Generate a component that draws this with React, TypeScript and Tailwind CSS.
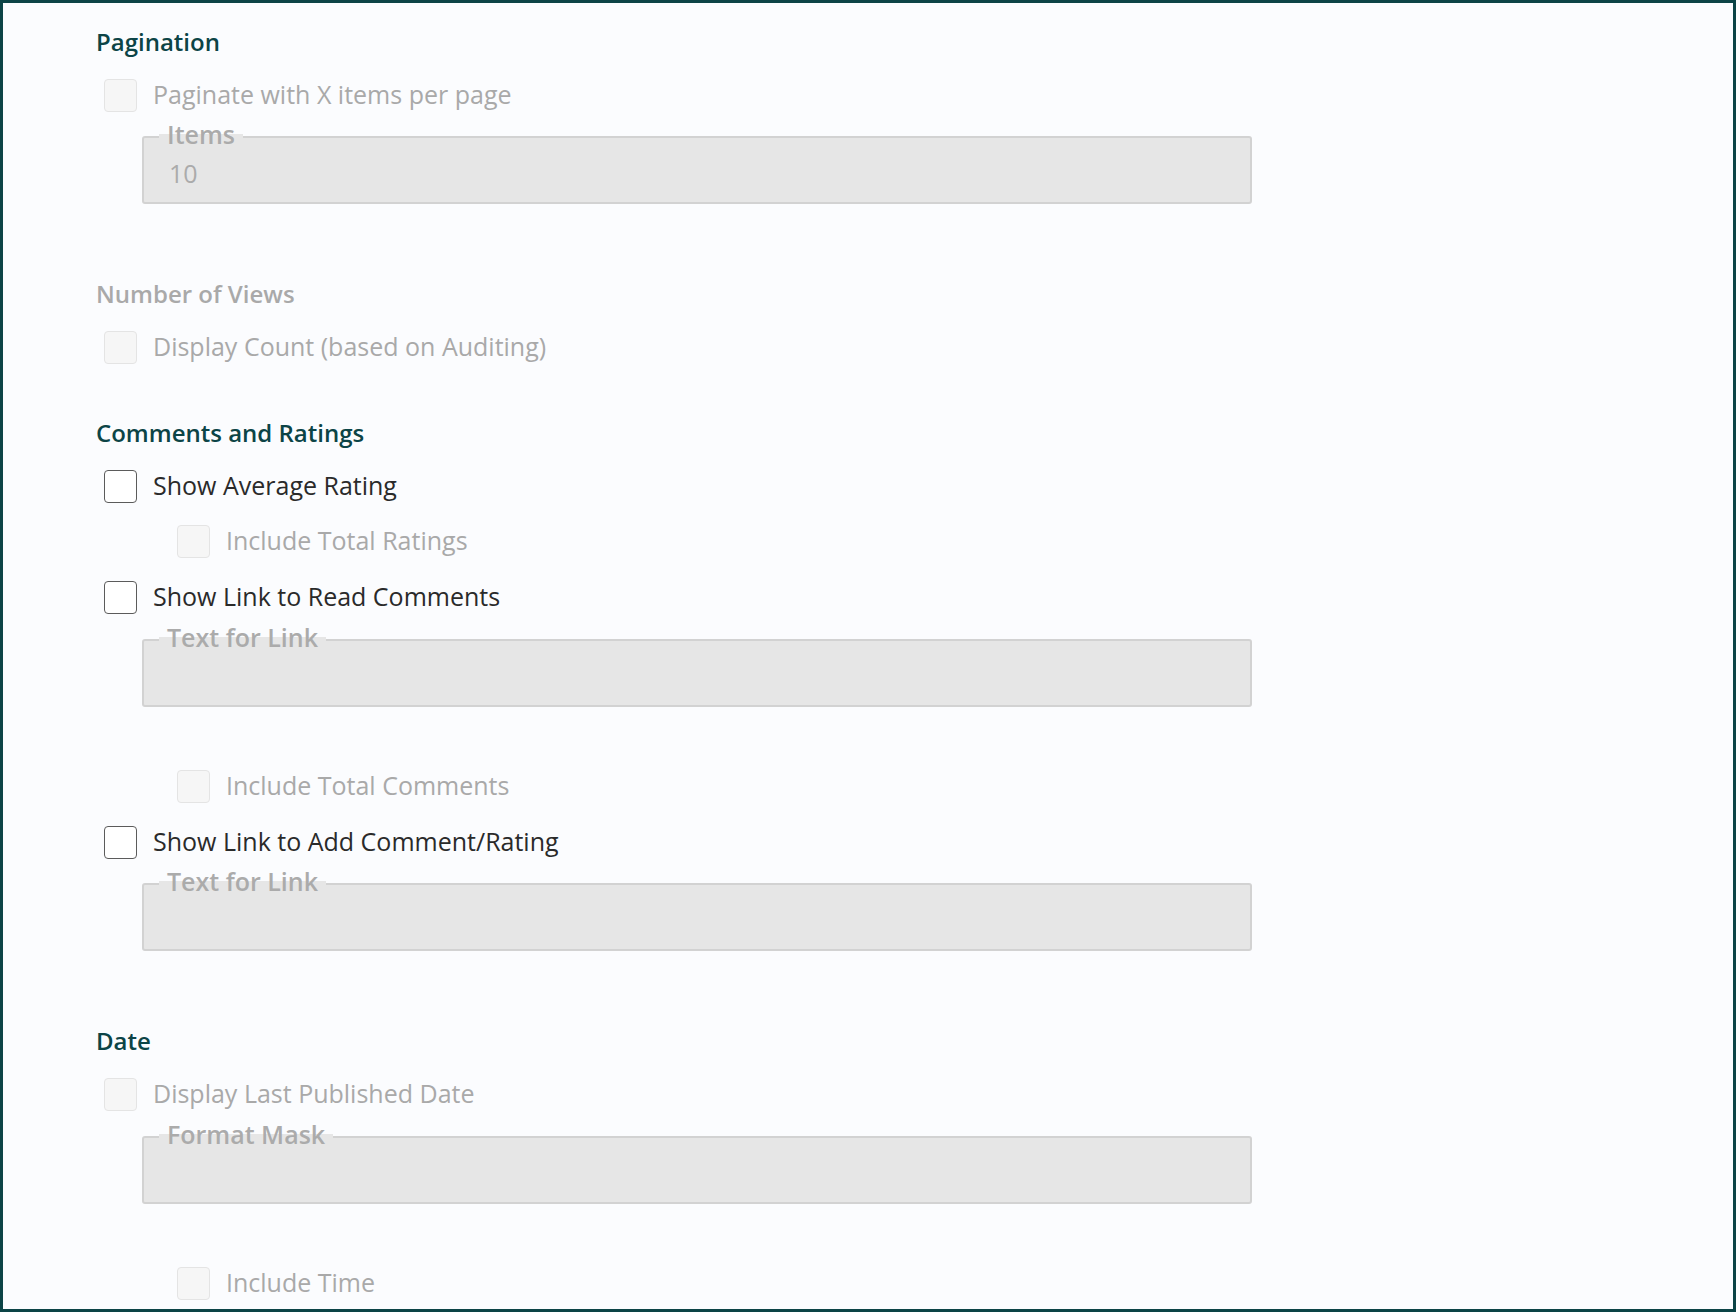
import React from "react";

const font = { fontFamily: '"Open Sans", "Liberation Sans", sans-serif' };

function Heading({ text, muted, className }: { text: string; muted?: boolean; className: string }) {
  return (
    <div className={`h-8 text-[24px] leading-8 font-semibold ${muted ? "text-[#a9a9a9]" : "text-[#0c4446]"} ${className}`}>
      {text}
    </div>
  );
}

function Check({ label, disabled, indent, className }: { label: string; disabled?: boolean; indent?: boolean; className: string }) {
  return (
    <div className={`flex items-center h-10 ${indent ? "pl-[81px]" : "pl-[8px]"} ${className}`}>
      <span
        className={`w-[33px] h-[33px] rounded-[4px] border ${
          disabled ? "border-[#e4e4e4] bg-[#f6f6f6]" : "border-[#5b5b5b] bg-white"
        }`}
      />
      <span className={`ml-[16px] text-[25px] ${disabled ? "text-[#a9a9a9]" : "text-[#2a2a2a]"}`}>{label}</span>
    </div>
  );
}

function Field({ label, value, className }: { label: string; value?: string; className: string }) {
  return (
    <div className={`relative ml-[46px] w-[1110px] h-[68px] rounded-[3px] border-2 border-[#d2d2d2] bg-[#e6e6e6] ${className}`}>
      <span className="absolute left-[15px] -top-[19px] px-[8px] h-[30px] leading-[30px] text-[25px] font-semibold text-[#ababab] bg-[linear-gradient(to_bottom,#fbfcfe_50%,#e6e6e6_50%)]">
        {label}
      </span>
      {value && <span className="absolute left-[25px] top-[17px] text-[25px] text-[#ababab]">{value}</span>}
    </div>
  );
}

export default function App() {
  return (
    <div style={font} className="w-[1736px] h-[1312px] border-[3px] border-[#0c4446] bg-[#fbfcfe] pl-[93px] pt-[23px] overflow-hidden">
      <Heading text="Pagination" className="" />
      <Check label="Paginate with X items per page" disabled className="mt-[17px]" />
      <Field label="Items" value="10" className="mt-[21px]" />

      <Heading text="Number of Views" muted className="mt-[74px]" />
      <Check label="Display Count (based on Auditing)" disabled className="mt-[17px]" />

      <Heading text="Comments and Ratings" className="mt-[50px]" />
      <Check label="Show Average Rating" className="mt-[17px]" />
      <Check label="Include Total Ratings" disabled indent className="mt-[15px]" />
      <Check label="Show Link to Read Comments" className="mt-[16px]" />
      <Field label="Text for Link" className="mt-[22px]" />
      <Check label="Include Total Comments" disabled indent className="mt-[59px]" />
      <Check label="Show Link to Add Comment/Rating" className="mt-[16px]" />
      <Field label="Text for Link" className="mt-[21px]" />

      <Heading text="Date" className="mt-[74px]" />
      <Check label="Display Last Published Date" disabled className="mt-[17px]" />
      <Field label="Format Mask" className="mt-[22px]" />
      <Check label="Include Time" disabled indent className="mt-[59px]" />
    </div>
  );
}
